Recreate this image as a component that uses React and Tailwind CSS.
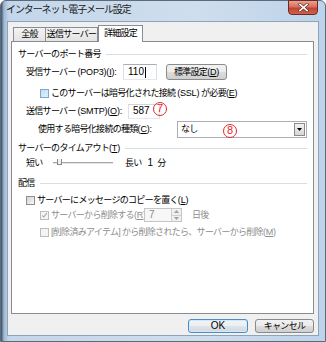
import React from 'react';

const Mn = ({ children }) => <span className="underline underline-offset-[1px]">{children}</span>;

const Lat = ({ children }) => <span className="tracking-[-0.2px]">{children}</span>;

const Header = ({ children, className = '' }) => (
  <div className={`flex items-center h-[14px] ${className}`}>
    <span className="whitespace-nowrap">{children}</span>
    <div className="flex-1 h-px bg-[#d5dfe5] ml-[5px]" />
  </div>
);

const Check = ({ checked, disabled, hover }) => (
  <span
    className={`relative inline-block w-[9px] h-[9px] shrink-0 border ${
      disabled
        ? 'border-[#bcbcbc] bg-[#f4f4f4]'
        : hover
        ? 'border-[#7fa6cc] bg-[linear-gradient(135deg,#bfe0f6,#dff0fb)]'
        : 'border-[#8e8f8f] bg-[linear-gradient(135deg,#d4d4d4,#f7f7f7)]'
    }`}
  >
    {checked && (
      <svg viewBox="0 0 9 9" className="absolute inset-0 w-full h-full">
        <path d="M1.5 4.5 L3.5 6.5 L7.5 1.5" fill="none" stroke="#a3a3a3" strokeWidth="1.3" />
      </svg>
    )}
  </span>
);

const Btn = ({ children, def, className = '' }) => (
  <div
    className={`flex items-center justify-center rounded-[3px] border whitespace-nowrap ${
      def
        ? 'border-[#4f8cc4] shadow-[inset_0_0_0_1px_#cfeafb] bg-[linear-gradient(#f2f5f8_0%,#eceff2_50%,#dfe4e9_51%,#d2d8de_100%)]'
        : 'border-[#8a8a8a] bg-[linear-gradient(#f2f2f2_0%,#ebebeb_50%,#dddddd_51%,#cfcfcf_100%)]'
    } ${className}`}
  >
    {children}
  </div>
);

const Circle = ({ n, className = '' }) => (
  <span
    className={`absolute w-[14px] h-[14px] rounded-full border-[1.5px] border-[#e8262a] text-[#e8262a] flex items-center justify-center text-[11px] leading-none tracking-normal [font-family:'Liberation_Sans',sans-serif] ${className}`}
  >
    {n}
  </span>
);

const TextBox = ({ children, className = '' }) => (
  <div
    className={`relative flex items-center bg-white border border-t-[#abadb3] border-l-[#dbdfe6] border-r-[#dbdfe6] border-b-[#e3e9ef] pl-[4px] text-[10px] tracking-normal ${className}`}
  >
    {children}
  </div>
);

export default function App() {
  return (
    <div className="w-[326px] h-[342px] overflow-hidden bg-white">
      <div className="w-[326px] h-[342px] flex flex-col rounded-t-[6px] border border-[#5b6b7c] bg-[linear-gradient(90deg,#3b4c60_0px,#9fbad6_3px,#c3d6ea_8px,#cfdeed_60%,#bcd3ea_100%)] [font-family:'Liberation_Sans','Noto_Sans_CJK_JP',sans-serif] text-[9px] tracking-[-0.7px] text-black">
        {/* title bar */}
        <div className="h-[20px] flex items-start justify-between shrink-0">
          <div className="pl-[5px] pt-[2px] text-[10px] tracking-[-1.1px] text-[#1b1b1b] leading-[14px] whitespace-nowrap">
            インターネット電子メール設定
          </div>
          <div className="mr-[7px] mt-[-1px] w-[30px] h-[15px] rounded-b-[4px] border border-[#6e2a22] bg-[linear-gradient(#e8a393_0%,#d7705c_45%,#c24531_55%,#d0604c_100%)] flex items-center justify-center">
            <svg viewBox="0 0 12 10" className="w-[11px] h-[9px]">
              <path d="M2 1.5 L10 8.5 M10 1.5 L2 8.5" stroke="#5a2a24" strokeWidth="3.2" strokeLinecap="square" />
              <path d="M2 1.5 L10 8.5 M10 1.5 L2 8.5" stroke="#ffffff" strokeWidth="1.8" strokeLinecap="square" />
            </svg>
          </div>
        </div>

        {/* client area */}
        <div className="flex-1 ml-[6px] mr-[6px] mb-[5px] border border-[#8ea2b8] bg-[#f0f0f0] flex flex-col pl-[3px] pr-[4px] pt-[2px]">
          {/* tabs */}
          <div className="flex items-end h-[17px] pl-[2px] leading-none whitespace-nowrap">
            <div className="h-[14px] w-[33px] border border-b-0 border-[#898c95] bg-[linear-gradient(#f3f3f3,#e3e3e3)] flex items-center justify-center">
              全般
            </div>
            <div className="h-[14px] w-[52px] border border-b-0 border-l-0 border-[#898c95] bg-[linear-gradient(#f3f3f3,#e3e3e3)] flex items-center justify-center">
              送信サーバー
            </div>
            <div className="relative z-10 h-[17px] w-[45px] mb-[-1px] border border-b-0 border-[#898c95] bg-white flex items-center justify-center pb-[1px]">
              詳細設定
            </div>
          </div>

          {/* panel */}
          <div className="h-[273px] border border-[#898c95] bg-white px-[6px] leading-[12px]">
            <Header className="mt-[5px]">サーバーのポート番号</Header>

            <div className="flex items-center h-[16px] mt-[3px] pl-[8px]">
              <span className="w-[97px] whitespace-nowrap">
                受信サーバー <Lat>(POP3)(<Mn>I</Mn>):</Lat>
              </span>
              <TextBox className="w-[34px] h-[16px]">
                110<span className="w-px h-[11px] bg-black ml-[1px]" />
              </TextBox>
              <Btn className="ml-[9px] w-[61px] h-[16px]">
                標準設定<Lat>(<Mn>D</Mn>)</Lat>
              </Btn>
            </div>

            <div className="flex items-center h-[12px] mt-[7px] pl-[22px] gap-[2px] whitespace-nowrap">
              <Check hover />
              <span>
                このサーバーは暗号化された接続 <Lat>(SSL)</Lat> が必要<Lat>(<Mn>E</Mn>)</Lat>
              </span>
            </div>

            <div className="flex items-center h-[16px] mt-[4px] pl-[8px]">
              <span className="w-[102px] whitespace-nowrap">
                送信サーバー <Lat>(SMTP)(<Mn>O</Mn>):</Lat>
              </span>
              <TextBox className="w-[32px] h-[15px] border-t-[#d0d3d8]">
                587
                <Circle n="7" className="left-[24px] top-[-3px]" />
              </TextBox>
            </div>

            <div className="flex items-center h-[18px] mt-[1px] pl-[20px]">
              <span className="w-[139px] whitespace-nowrap">
                使用する暗号化接続の種類<Lat>(<Mn>C</Mn>):</Lat>
              </span>
              <div className="relative w-[130px] h-[17px] bg-white border border-[#abadb3] flex items-center justify-between pl-[3px] pr-[1px]">
                <span>なし</span>
                <Circle n="8" className="left-[45px] top-[2px]" />
                <div className="w-[11px] h-[13px] border border-[#8a8a8a] bg-[linear-gradient(#f2f2f2,#d6d6d6)] flex items-center justify-center">
                  <svg viewBox="0 0 5 3" className="w-[5px] h-[3px]">
                    <path d="M0 0 H5 L2.5 3 Z" fill="#000" />
                  </svg>
                </div>
              </div>
            </div>

            <Header className="mt-[3px]">
              サーバーのタイムアウト<Lat>(<Mn>T</Mn>)</Lat>
            </Header>

            <div className="flex items-center h-[14px] mt-[1px] pl-[8px] whitespace-nowrap">
              <span className="w-[27px]">短い</span>
              <div className="relative w-[60px] h-[3px] border-t border-t-[#a8a8a8] border-b border-b-white bg-[#e4e4e4]">
                <div className="absolute left-[4px] top-[-4px] w-[5px] h-[6px] border border-[#8a8a8a] border-t-0 bg-[#f0f0f0]" />
              </div>
              <span className="ml-[12px]">長い</span>
              <span className="ml-[6px] text-[10px] tracking-normal">1</span>
              <span className="ml-[4px]">分</span>
            </div>

            <Header className="mt-[6px]">配信</Header>

            <div className="flex items-center h-[12px] mt-[4px] pl-[8px] gap-[2px] whitespace-nowrap">
              <Check />
              <span>
                サーバーにメッセージのコピーを置く<Lat>(<Mn>L</Mn>)</Lat>
              </span>
            </div>

            <div className="flex items-center h-[14px] mt-[2px] pl-[22px] whitespace-nowrap text-[#8d8d8d]">
              <Check checked disabled />
              <span className="ml-[2px] w-[93px]">
                サーバーから削除する<Lat>(<Mn>R</Mn>)</Lat>
              </span>
              <div className="w-[38px] h-[14px] border border-[#c6c6c6] bg-[#f7f7f7] flex items-center justify-between pl-[4px] text-[10px] tracking-normal">
                <span>7</span>
                <div className="w-[10px] h-full flex flex-col border-l border-[#d0d0d0]">
                  <div className="flex-1 flex items-center justify-center border-b border-[#d0d0d0] bg-[#efefef]">
                    <svg viewBox="0 0 5 3" className="w-[5px] h-[3px]">
                      <path d="M0 3 H5 L2.5 0 Z" fill="#a0a0a0" />
                    </svg>
                  </div>
                  <div className="flex-1 flex items-center justify-center bg-[#efefef]">
                    <svg viewBox="0 0 5 3" className="w-[5px] h-[3px]">
                      <path d="M0 0 H5 L2.5 3 Z" fill="#a0a0a0" />
                    </svg>
                  </div>
                </div>
              </div>
              <span className="ml-[10px]">日後</span>
            </div>

            <div className="flex items-center h-[12px] mt-[4px] pl-[22px] gap-[2px] whitespace-nowrap text-[#8d8d8d]">
              <Check disabled />
              <span>
                [削除済みアイテム] から削除されたら、サーバーから削除<Lat>(<Mn>M</Mn>)</Lat>
              </span>
            </div>
          </div>

          {/* buttons */}
          <div className="flex justify-end gap-[7px] mt-[5px] leading-none">
            <Btn def className="w-[60px] h-[14px] text-[10px] tracking-normal">
              OK
            </Btn>
            <Btn className="w-[59px] h-[14px]">キャンセル</Btn>
          </div>
        </div>
      </div>
    </div>
  );
}
